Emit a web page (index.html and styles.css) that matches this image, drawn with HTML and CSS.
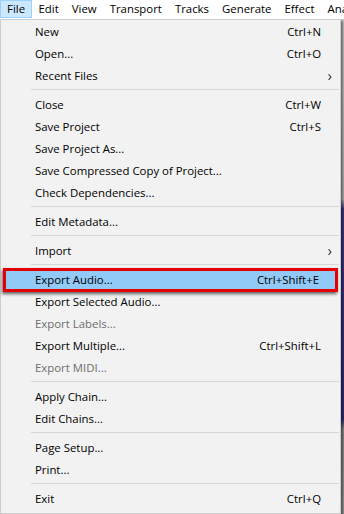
FILE: index.html
```html
<!DOCTYPE html>
<html lang="en">

<head>
    <meta charset="UTF-8">
    <meta name="viewport" content="width=device-width, initial-scale=1.0">
    <title>File Menu</title>
    <link rel="stylesheet" href="styles.css">
</head>

<body>
    <!-- Top menu bar -->
    <nav class="menubar">
        <span class="menubar-item open">File</span>
        <span class="menubar-item">Edit</span>
        <span class="menubar-item">View</span>
        <span class="menubar-item">Transport</span>
        <span class="menubar-item">Tracks</span>
        <span class="menubar-item">Generate</span>
        <span class="menubar-item">Effect</span>
        <span class="menubar-item">Analyze</span>
    </nav>

    <div class="workspace">
        <!-- Dropdown -->
        <div class="menu">
            <div class="item"><span class="label">New</span><span class="key">Ctrl+N</span><span class="sub"></span></div>
            <div class="item"><span class="label">Open...</span><span class="key">Ctrl+O</span><span class="sub"></span></div>
            <div class="item"><span class="label">Recent Files</span><span class="key"></span><span class="sub">&#x203A;</span></div>
            <div class="separator"></div>
            <div class="item"><span class="label">Close</span><span class="key">Ctrl+W</span><span class="sub"></span></div>
            <div class="item"><span class="label">Save Project</span><span class="key">Ctrl+S</span><span class="sub"></span></div>
            <div class="item"><span class="label">Save Project As...</span><span class="key"></span><span class="sub"></span></div>
            <div class="item"><span class="label">Save Compressed Copy of Project...</span><span class="key"></span><span class="sub"></span></div>
            <div class="item"><span class="label">Check Dependencies...</span><span class="key"></span><span class="sub"></span></div>
            <div class="separator"></div>
            <div class="item"><span class="label">Edit Metadata...</span><span class="key"></span><span class="sub"></span></div>
            <div class="separator"></div>
            <div class="item"><span class="label">Import</span><span class="key"></span><span class="sub">&#x203A;</span></div>
            <div class="separator"></div>
            <div class="item active"><span class="label">Export Audio...</span><span class="key">Ctrl+Shift+E</span><span class="sub"></span></div>
            <div class="item"><span class="label">Export Selected Audio...</span><span class="key"></span><span class="sub"></span></div>
            <div class="item disabled"><span class="label">Export Labels...</span><span class="key"></span><span class="sub"></span></div>
            <div class="item"><span class="label">Export Multiple...</span><span class="key">Ctrl+Shift+L</span><span class="sub"></span></div>
            <div class="item disabled"><span class="label">Export MIDI...</span><span class="key"></span><span class="sub"></span></div>
            <div class="separator"></div>
            <div class="item"><span class="label">Apply Chain...</span><span class="key"></span><span class="sub"></span></div>
            <div class="item"><span class="label">Edit Chains...</span><span class="key"></span><span class="sub"></span></div>
            <div class="separator"></div>
            <div class="item"><span class="label">Page Setup...</span><span class="key"></span><span class="sub"></span></div>
            <div class="item"><span class="label">Print...</span><span class="key"></span><span class="sub"></span></div>
            <div class="separator"></div>
            <div class="item"><span class="label">Exit</span><span class="key">Ctrl+Q</span><span class="sub"></span></div>
        </div>
        <!-- Bit of the app window peeking out on the right -->
        <div class="backdrop"></div>
    </div>
</body>

</html>
```

FILE: styles.css
```css
body {
    font-family: 'Open Sans', 'Noto Sans', sans-serif;
    font-size: 11.4px;
    color: #000;
    margin: 0;
    padding: 0;
    width: 344px;
    height: 514px;
    overflow: hidden;
    background-color: #f0f0f0;
}

.menubar {
    display: flex;
    height: 19px;
    background-color: #fff;
    white-space: nowrap;
    overflow: hidden;
}

.menubar-item {
    padding: 0 6.5px;
    line-height: 18px;
}

.menubar-item.open {
    padding: 0 7px;
    background-color: #cce8ff;
    box-shadow: inset 0 0 0 1px #99d1ff;
    height: 18px;
}

.workspace {
    display: flex;
}

.menu {
    width: 341px;
    flex-shrink: 0;
    box-sizing: border-box;
    padding: 0 0 2px 0;
    background-color: #f2f2f2;
    border: 1px solid #cccccc;
    box-shadow: 2px 2px 2px rgba(0, 0, 0, 0.45);
    position: relative;
    z-index: 1;
}

.item {
    display: grid;
    grid-template-columns: 1fr auto 19px;
    align-items: center;
    height: 22px;
    padding-left: 34px;
    white-space: nowrap;
    position: relative;
}

.item .key {
    text-align: right;
}

.item .sub {
    text-align: right;
    padding-right: 8px;
    font-size: 15px;
    color: #333;
}

.item.disabled {
    color: #6d6d6d;
}

.item.active {
    background-color: #91c9f7;
    margin: 0 2px;
    padding-left: 32px;
}

/* red call-out box drawn over the highlighted row */
.item.active::after {
    content: '';
    position: absolute;
    left: 0;
    right: 0;
    top: 0;
    bottom: -2px;
    border: 3px solid #e50000;
    box-shadow: -1px 2px 3px rgba(0, 0, 0, 0.6);
}

.separator {
    height: 1px;
    margin: 3px 1px 3px 30px;
    background-color: #d7d7d7;
}

.backdrop {
    flex: 1;
    height: 495px;
    background: linear-gradient(#c8c8c8 0, #b4b4b4 180px, #3a3a8a 190px, #2d2d7a 400px, #8a8a8a 410px, #9a9a9a 100%);
}
```
